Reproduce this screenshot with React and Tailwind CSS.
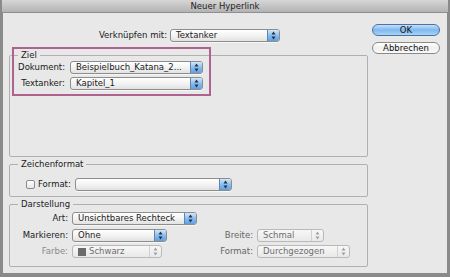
const font = { fontFamily: '"DejaVu Sans", "Liberation Sans", sans-serif' };

const Arrows = ({ color }) => (
  <svg width="5" height="9" viewBox="0 0 5 9">
    <path d="M2.5 0.5 L4.5 3.5 L0.5 3.5 Z" fill={color} />
    <path d="M2.5 8.5 L4.5 5.5 L0.5 5.5 Z" fill={color} />
  </svg>
);

const Select = ({ w, value, disabled, swatch }) => {
  if (disabled) {
    return (
      <div className={`${w} h-[13px] flex rounded-[3px] border border-[#b9b9b9] bg-gradient-to-b from-[#f7f7f7] to-[#e9e9e9] overflow-hidden`}>
        <div className="flex-1 flex items-center pl-[5px] text-[#6e6e6e] truncate">
          {swatch && <span className="w-[8px] h-[8px] bg-[#6b6b6b] mr-[3px] shrink-0" />}
          {value}
        </div>
        <div className="w-[12px] flex items-center justify-center border-l border-[#d0d0d0]">
          <Arrows color="#a0a0a0" />
        </div>
      </div>
    );
  }
  return (
    <div className={`${w} h-[13px] flex rounded-[3px] border border-[#8d8d8d] bg-gradient-to-b from-[#ffffff] via-[#f3f3f3] to-[#e2e2e2] overflow-hidden shadow-[0_1px_0_rgba(255,255,255,0.6)]`}>
      <div className="flex-1 flex items-center pl-[5px] text-[#1a1a1a] truncate">{value}</div>
      <div className="w-[12px] flex items-center justify-center border-l border-[#5d86b3] bg-gradient-to-b from-[#d4e7f8] via-[#8bbdec] to-[#5f9fe0]">
        <Arrows color="#1d2f4a" />
      </div>
    </div>
  );
};

const Group = ({ title, h, children }) => (
  <fieldset className={`${h} border border-[#b0b0b0] rounded-[2px] box-border`}>
    <legend className="ml-[8px] px-[3px] leading-[10px] text-[#1a1a1a]">{title}</legend>
    {children}
  </fieldset>
);

export default function App() {
  return (
    <div style={font} className="relative w-[450px] h-[277px] bg-[#8a8a8a] text-[8.5px] leading-[13px] text-[#1a1a1a] overflow-hidden">
      <div className="h-[13px] mx-[2px] bg-gradient-to-b from-[#d6d6d6] to-[#b3b3b3] flex items-center justify-center border-b border-[#8f8f8f] text-[#222]">
        Neuer Hyperlink
      </div>
      <div className="ml-[3px] mr-[3px] h-[260px] bg-[#e8e8e8] flex">
        <div className="w-[365px] flex flex-col">
          <div className="mt-[16px] flex items-center">
            <div className="w-[164px] text-right">Verknüpfen mit:</div>
            <div className="ml-[3px]">
              <Select w="w-[110px]" value="Textanker" />
            </div>
          </div>

          <div className="mt-[8px] pl-[6px]">
            <Group title="Ziel" h="h-[107px]">
              <div className="mt-[1px] flex items-center">
                <div className="w-[55px] text-right">Dokument:</div>
                <div className="ml-[5px]">
                  <Select w="w-[133px]" value="Beispielbuch_Katana_2..." />
                </div>
              </div>
              <div className="mt-[3px] flex items-center">
                <div className="w-[55px] text-right">Textanker:</div>
                <div className="ml-[5px]">
                  <Select w="w-[133px]" value="Kapitel_1" />
                </div>
              </div>
            </Group>
          </div>

          <div className="mt-[2px] pl-[6px]">
            <Group title="Zeichenformat" h="h-[38px]">
              <div className="mt-[9px] flex items-center">
                <div className="w-[65px] flex items-center pl-[16px]">
                  <span className="w-[9px] h-[9px] border border-[#8c8c8c] rounded-[2px] bg-gradient-to-b from-white to-[#e6e6e6] shrink-0" />
                  <span className="ml-[3px]">Format:</span>
                </div>
                <Select w="w-[157px]" value="" />
              </div>
            </Group>
          </div>

          <div className="mt-[2px] pl-[6px]">
            <Group title="Darstellung" h="h-[68px]">
              <div className="mt-[3px] flex items-center">
                <div className="w-[58px] text-right">Art:</div>
                <div className="ml-[4px]">
                  <Select w="w-[125px]" value="Unsichtbares Rechteck" />
                </div>
              </div>
              <div className="mt-[4px] flex items-center">
                <div className="w-[190px] flex items-center">
                  <div className="w-[58px] text-right">Markieren:</div>
                  <div className="ml-[4px]">
                    <Select w="w-[95px]" value="Ohne" />
                  </div>
                </div>
                <div className="w-[53px] text-right text-[#666]">Breite:</div>
                <div className="ml-[4px]">
                  <Select w="w-[67px]" value="Schmal" disabled />
                </div>
              </div>
              <div className="mt-[3px] flex items-center">
                <div className="w-[190px] flex items-center">
                  <div className="w-[58px] text-right text-[#8a8a8a]">Farbe:</div>
                  <div className="ml-[4px]">
                    <Select w="w-[90px]" value="Schwarz" disabled swatch />
                  </div>
                </div>
                <div className="w-[53px] text-right text-[#666]">Format:</div>
                <div className="ml-[4px]">
                  <Select w="w-[93px]" value="Durchgezogen" disabled />
                </div>
              </div>
            </Group>
          </div>
        </div>

        <div className="ml-[4px] flex flex-col">
          <button className="mt-[11px] w-[68px] h-[12px] rounded-full border border-[#4a73a3] bg-gradient-to-b from-[#c4e0fa] via-[#7fb8ee] to-[#a9d4f7] flex items-center justify-center leading-none text-[#111]">
            OK
          </button>
          <button className="mt-[6px] w-[68px] h-[12px] rounded-full border border-[#8a8a8a] bg-gradient-to-b from-white via-[#f0f0f0] to-[#fafafa] flex items-center justify-center leading-none text-[#111]">
            Abbrechen
          </button>
        </div>
      </div>

      <div className="absolute left-[12px] top-[47px] w-[199px] h-[49px] border-2 border-[#b0628f] pointer-events-none" />
    </div>
  );
}
